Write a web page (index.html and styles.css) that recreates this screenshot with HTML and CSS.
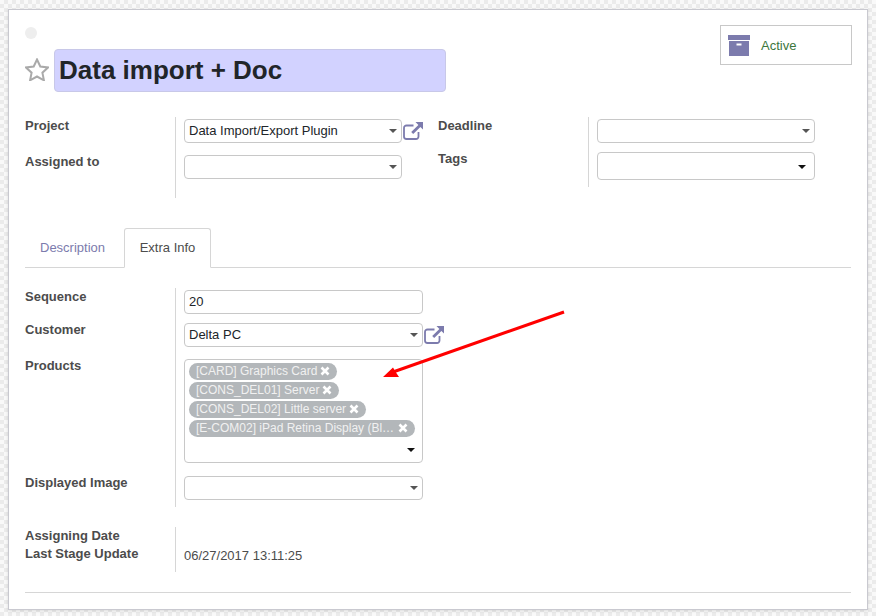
FILE: index.html
```html
<!DOCTYPE html>
<html lang="en">
<head>
  <meta charset="UTF-8" />
  <title>Data import + Doc</title>
  <link rel="stylesheet" href="styles.css">
</head>
<body>

  <div class="sheet">
    <header class="top">
      <div class="title-side">
        <span class="dot"></span>
        <div class="title-row">
          <svg class="star" viewBox="0 0 24 23"><path d="M12 1.500l3.300 7 7.700 1-5.600 5.200 1.500 7.600-6.900-3.800-6.900 3.800 1.500-7.600L1 9.500l7.700-1z"/></svg>
          <h1 class="title">Data import + Doc</h1>
        </div>
      </div>
      <div class="status-box">
        <svg class="box-icon" viewBox="0 0 22 21"><path d="M0 0h22v5H0z"/><path d="M1 6h20v15H1zM8.500 8.500v2h5v-2z" fill-rule="evenodd"/></svg>
        <span>Active</span>
      </div>
    </header>

    <section class="columns">
      <div class="group group-left">
        <div class="row row-project">
          <label>Project</label>
          <div class="field with-link">
            <div class="select">Data Import/Export Plugin<i class="caret"></i></div>
            <svg class="ext" viewBox="0 0 20 18"><path d="M15.500 10v4.500a2.500 2.500 0 0 1-2.500 2.500H3.500A2.500 2.500 0 0 1 1 14.500V6a2.500 2.500 0 0 1 2.500-2.500h7" fill="none" stroke-width="1.800"/><path d="M12.500 0H20v7.500l-2.600-2.600-7.200 7.200-2-2 7.200-7.200z" stroke="none"/></svg>
          </div>
        </div>
        <div class="row row-assigned">
          <label>Assigned to</label>
          <div class="field"><div class="select"><i class="caret"></i></div></div>
        </div>
      </div>
      <div class="group group-right">
        <div class="row row-deadline">
          <label>Deadline</label>
          <div class="field"><div class="select"><i class="caret"></i></div></div>
        </div>
        <div class="row row-tags">
          <label>Tags</label>
          <div class="field"><div class="select select-tall"><i class="caret caret-dark"></i></div></div>
        </div>
      </div>
    </section>

    <nav class="tabs">
      <a class="tab">Description</a>
      <a class="tab active">Extra Info</a>
    </nav>

    <section class="group group-wide">
      <div class="row row-seq">
        <label>Sequence</label>
        <div class="field"><div class="select">20</div></div>
      </div>
      <div class="row row-customer">
        <label>Customer</label>
        <div class="field with-link">
          <div class="select">Delta PC<i class="caret"></i></div>
          <svg class="ext" viewBox="0 0 20 18"><path d="M15.500 10v4.500a2.500 2.500 0 0 1-2.500 2.500H3.500A2.500 2.500 0 0 1 1 14.500V6a2.500 2.500 0 0 1 2.500-2.500h7" fill="none" stroke-width="1.800"/><path d="M12.500 0H20v7.500l-2.600-2.600-7.200 7.200-2-2 7.200-7.200z" stroke="none"/></svg>
        </div>
      </div>
      <div class="row row-products">
        <label>Products</label>
        <div class="field">
          <div class="tagbox">
            <span class="chip">[CARD] Graphics Card<svg class="x" viewBox="0 0 10 10"><path d="M1.500 1.500l7 7M8.500 1.500l-7 7"/></svg></span>
            <span class="chip">[CONS_DEL01] Server<svg class="x" viewBox="0 0 10 10"><path d="M1.500 1.500l7 7M8.500 1.500l-7 7"/></svg></span>
            <span class="chip">[CONS_DEL02] Little server<svg class="x" viewBox="0 0 10 10"><path d="M1.500 1.500l7 7M8.500 1.500l-7 7"/></svg></span>
            <span class="chip chip-long">[E-COM02] iPad Retina Display (Bl…<svg class="x" viewBox="0 0 10 10"><path d="M1.500 1.500l7 7M8.500 1.500l-7 7"/></svg></span>
            <i class="caret caret-dark"></i>
          </div>
        </div>
      </div>
      <div class="row row-image">
        <label>Displayed Image</label>
        <div class="field"><div class="select"><i class="caret"></i></div></div>
      </div>
    </section>

    <section class="group group-dates">
      <div class="row row-date1">
        <label>Assigning Date</label>
        <div class="field"></div>
      </div>
      <div class="row row-date2">
        <label>Last Stage Update</label>
        <div class="field plain">06/27/2017 13:11:25</div>
      </div>
    </section>

    <hr class="rule">

    <svg class="arrow" viewBox="0 0 200 80"><path d="M189 7L18 67" fill="none" stroke="#f00" stroke-width="3"/><path d="M8 72l10-9.500 3 5 3 4.500z" fill="#f00"/></svg>
  </div>

</body>
</html>
```

FILE: styles.css
```css
*{margin:0;padding:0;box-sizing:border-box}
html,body{height:100%}
body{font-family:"Liberation Sans",Arial,sans-serif;font-size:13px;color:#4c4c4c;background-color:#f2f2f2;background-image:repeating-conic-gradient(#ebebeb 0 25%,#f9f9f9 0 50%);background-size:8px 8px;padding:9px 8px 6px 8px;overflow:hidden}
.sheet{position:relative;width:860px;height:601px;background:#fff;border:1px solid #c9c9d0;box-shadow:0 1px 3px rgba(0,0,0,0.12);padding:16px 16px 0 16px}

.top{display:flex;justify-content:space-between;align-items:flex-start}
.dot{display:block;width:12px;height:12px;border-radius:50%;background:#eeeeee;margin-top:1px}
.title-row{display:flex;align-items:center;gap:5px;margin-top:10px}
.star{width:24px;height:23px;margin-top:-3px;fill:#fff;stroke:#aaa;stroke-width:2}
.title{width:392px;height:43px;line-height:41px;padding-left:4px;font-size:26px;font-weight:bold;color:#212529;background:#d2d2ff;border:1px solid #c8c8e8;border-radius:4px}
.status-box{display:flex;align-items:center;width:132px;height:40px;gap:11px;padding-left:7px;border:1px solid #c8c8c8;color:#3c763d;margin:-1px -1px 0 0}
.box-icon{width:22px;height:21px;fill:#7c7bad}

.columns{display:grid;grid-template-columns:413px 1fr;margin-top:25px}
.row{display:flex}
.row label{width:150px;flex:none;font-weight:bold;line-height:18px}
.field{flex:1;border-left:1px solid #d6d6d6;padding:2px 0 0 8px;color:#212529}
.with-link{display:flex;gap:1px}
.select{position:relative;width:239px;height:24px;line-height:22px;padding-left:4px;border:1px solid #c8c8c8;border-radius:4px;background:#fff}
.group-left .select,.group-right .select{width:218px}
.group-right .select-tall{height:28px}
.caret{position:absolute;right:4px;top:9px;width:0;height:0;border:4px solid transparent;border-top-color:#555;border-bottom:0}
.caret-dark{border-top-color:#111}
.select-tall .caret{right:8px;top:12px}
.ext{width:20px;height:18px;margin-top:3px;fill:#7c7bad;stroke:#7c7bad}

.row-project{height:36px}
.row-assigned{height:45px}
.row-deadline{height:33px}
.row-tags{height:37px}
.row-seq{height:33px}
.row-customer{height:36px}
.row-products{height:117px}
.row-image{height:33px}
.row-date1{height:18px}
.row-date2{height:27px}
.row-date1 .field,.row-date2 .field{padding-top:0}
.plain{color:#4c4c4c;line-height:22px}

.tabs{display:flex;height:40px;margin-top:30px;border-bottom:1px solid #d6d6d6}
.tab{height:40px;line-height:38px;padding:0 14px;color:#7c7bad;border:1px solid transparent}
.tab.active{width:87px;text-align:center;padding:0;color:#4c4c4c;background:#fff;border-color:#d6d6d6 #d6d6d6 #fff;border-radius:3px 3px 0 0;margin-left:4px}

.group-wide{margin-top:20px}
.group-dates{margin-top:20px}
.tagbox{position:relative;width:239px;height:104px;padding:3px 4px;border:1px solid #c8c8c8;border-radius:4px;display:flex;flex-direction:column;align-items:flex-start;gap:2px}
.chip{display:flex;align-items:center;height:17px;padding:0 7px 1px 7px;gap:3px;font-size:12px;color:#f1f1f1;background:#b3b7ba;border-radius:9px;white-space:nowrap}
.chip-long{gap:4px}
.x{width:10px;height:10px;fill:none;stroke:#fff;stroke-width:2.600}
.tagbox .caret{right:7px;top:88px}

.rule{border:0;border-top:1px solid #d6d6d6;margin-top:20px}

.arrow{position:absolute;left:366px;top:295px;width:200px;height:80px}
```
